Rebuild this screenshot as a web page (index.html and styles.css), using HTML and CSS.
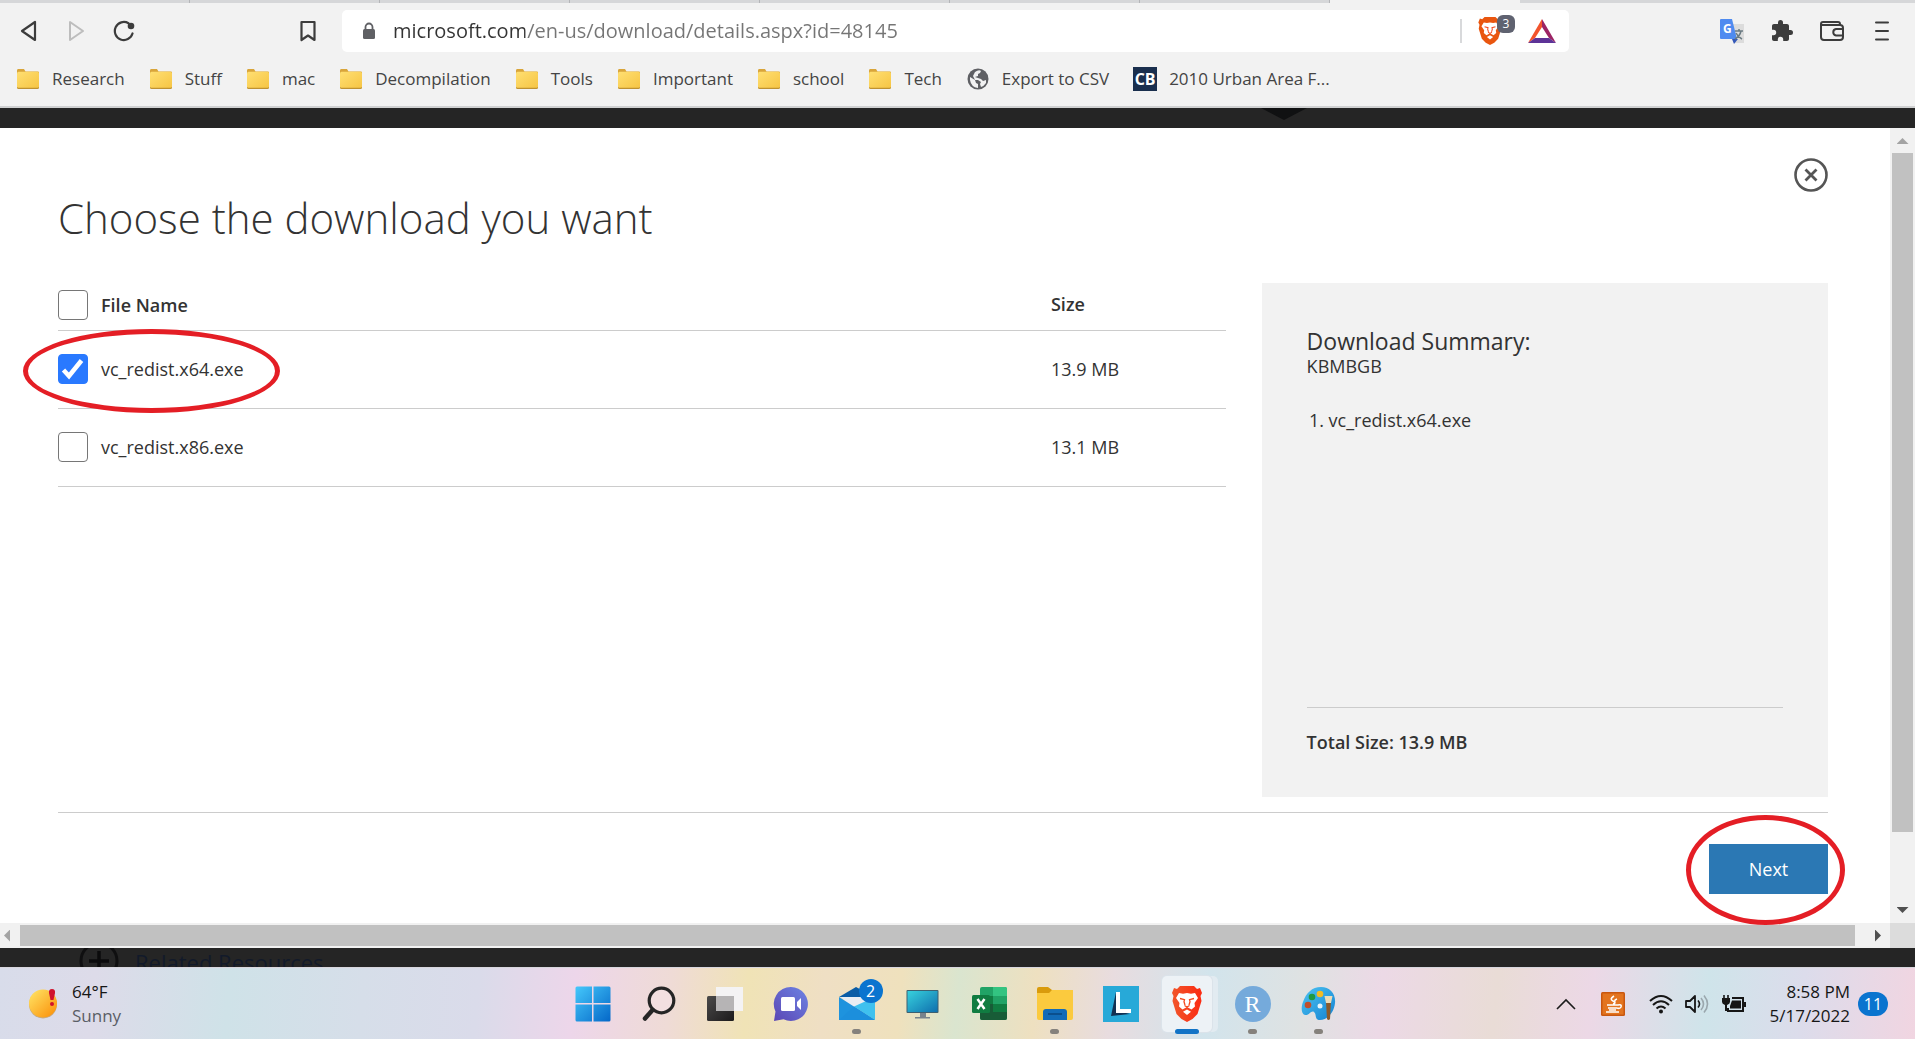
FILE: index.html
```html
<!DOCTYPE html>
<html lang="en">
<head>
<meta charset="utf-8">
<title>Choose the download you want</title>
<link rel="stylesheet" href="styles.css">
</head>
<body>
<svg class="defs" aria-hidden="true">
  <defs>
    <linearGradient id="gFolder" x1="0" y1="0" x2="1" y2="1"><stop offset="0" stop-color="#ffdf72"/><stop offset="1" stop-color="#f6c544"/></linearGradient>
    <linearGradient id="gLion" x1="0" y1="0" x2="1" y2="0"><stop offset="0" stop-color="#f1562b"/><stop offset="1" stop-color="#fb2a12"/></linearGradient>
    <linearGradient id="gWin" x1="0" y1="0" x2="1" y2="1"><stop offset="0" stop-color="#45c8fb"/><stop offset="1" stop-color="#0467c8"/></linearGradient>
    <linearGradient id="gChat" x1="1" y1="0" x2="0" y2="1"><stop offset="0" stop-color="#6d84e4"/><stop offset="1" stop-color="#5b46b4"/></linearGradient>
    <linearGradient id="gScreen" x1="0" y1="0" x2="1" y2="1"><stop offset="0" stop-color="#37d1dd"/><stop offset="1" stop-color="#0f6fae"/></linearGradient>
    <linearGradient id="gSun" x1="0" y1="0" x2="1" y2="1"><stop offset="0" stop-color="#ffe768"/><stop offset="1" stop-color="#fb8c05"/></linearGradient>
    <linearGradient id="gPal" x1="0" y1="0" x2="1" y2="1"><stop offset="0" stop-color="#4ec4f2"/><stop offset="1" stop-color="#1382d2"/></linearGradient>
    <linearGradient id="gDark" x1="0" y1="0" x2="1" y2="1"><stop offset="0" stop-color="#4b4a4a"/><stop offset="1" stop-color="#1c1a1b"/></linearGradient>
    <symbol id="folder" viewBox="0 0 24 20"><path d="M1 1.500q0-1.500 1-1.500h6l1.500 2.500H22q1 0 1 1v5H1z" fill="#d9a53a"/><rect x="1" y="3" width="22" height="17" rx="1.500" fill="#bf9231"/><rect x="1" y="2.800" width="22" height="16" rx="1.500" fill="url(#gFolder)"/></symbol>
    <symbol id="lion" viewBox="0 0 30 36">
      <path d="M8 0h14l3 3 3-1 2 5-1.500 3 1 5-4 13-5 5-5.500 3-5.500-3-5-5-4-13 1-5L0 7l2-5 3 1z"/>
      <path d="M7 7l4 .8 4-.8 4 .8 4-.8 3 5-3.500 5 .5 3.500-3.500 3-4.500-2.500-4.500 2.500-3.500-3 .5-3.500L4 12z" fill="#fff"/>
      <path d="M15 23.500l4 2.200-4 3.300-4-3.300z" fill="#fff"/>
      <path d="M8 12.500l4.500 1.200-.5 2 1 3.300M22 12.500l-4.500 1.200.5 2-1 3.300M12.500 19.500l2.500 1.500 2.500-1.500" fill="none" stroke="#f4481d" stroke-width="1.300"/>
    </symbol>
  </defs>
</svg>

<header class="browser">
  <div class="tabs"><i></i><i></i><i></i><i></i><i></i><i></i><i></i><b></b><i class="rest"></i></div>
  <nav class="navrow">
    <div class="nav-left">
      <button aria-label="Back"><svg width="20" height="22" viewBox="0 0 20 22"><path d="M17 2v18L4 11z" fill="none" stroke="#3c3c3c" stroke-width="2.200" stroke-linejoin="round"/></svg></button>
      <button aria-label="Forward"><svg width="20" height="22" viewBox="0 0 20 22"><path d="M4 2v18l13-9z" fill="none" stroke="#bdbdbd" stroke-width="2" stroke-linejoin="round"/></svg></button>
      <button aria-label="Reload"><svg width="22" height="22" viewBox="0 0 22 22"><path d="M15.500 3.300A9 9 0 1 0 19.500 13.500" fill="none" stroke="#3c3c3c" stroke-width="2.200" stroke-linecap="round"/><circle cx="18" cy="6" r="3.300" fill="#3c3c3c"/></svg></button>
      <button class="mark" aria-label="Bookmark this page"><svg width="18" height="22" viewBox="0 0 18 22"><path d="M2.500 2h13v18L9 15.500 2.500 20z" fill="none" stroke="#3c3c3c" stroke-width="2.200" stroke-linejoin="round"/></svg></button>
    </div>
    <div class="address">
      <svg class="lock" width="14" height="18" viewBox="0 0 14 18"><path d="M3.500 8V5a3.500 3.500 0 0 1 7 0v3" fill="none" stroke="#5f6064" stroke-width="1.800"/><rect x="1" y="7" width="12" height="10" rx="1.500" fill="#5f6064"/></svg>
      <input class="url" type="text" aria-label="Address" value="microsoft.com/en-us/download/details.aspx?id=48145">
      <span class="sep"></span>
      <button class="shield" aria-label="Brave Shields"><svg width="24" height="28" fill="#e9560f"><use href="#lion"/></svg><span class="count">3</span></button>
      <button aria-label="Brave Rewards"><svg width="28" height="26" viewBox="0 0 28 26"><path d="M14 1L0 25l7-5 7-11z" fill="#f2542d"/><path d="M14 1l14 24-7-5-7-11z" fill="#9c2464"/><path d="M0 25h28l-7-5H7z" fill="#5d3397"/></svg></button>
    </div>
    <div class="nav-right">
      <button aria-label="Translate"><svg width="25" height="25" viewBox="0 0 25 25"><path d="M9 5h15v19H14z" fill="#dcdcdc"/><path d="M12 20h6l-4 5z" fill="#3458b8"/><path d="M1 0h11l5 20H1q-1 0-1-1V1q0-1 1-1z" fill="#4f8bf0"/><path d="M15 12h8M19 10v2M21 12q-1 5-6 8M16 14q2 4 6 6" stroke="#6b7b83" stroke-width="1.500" fill="none"/><text x="3" y="14" class="g">G</text></svg></button>
      <button aria-label="Extensions"><svg width="24" height="24" viewBox="0 0 24 24"><path d="M20.500 11H19V7c0-1.100-.9-2-2-2h-4V3.500a2.500 2.500 0 0 0-5 0V5H4c-1.100 0-2 .9-2 2v3.800h1.500a2.700 2.700 0 0 1 0 5.400H2V20c0 1.100.9 2 2 2h3.800v-1.500a2.700 2.700 0 0 1 5.400 0V22H17c1.100 0 2-.9 2-2v-4h1.500a2.500 2.500 0 0 0 0-5z" fill="#3c3c3c"/></svg></button>
      <button aria-label="Wallet"><svg width="24" height="20" viewBox="0 0 24 20"><path d="M20 4V3a2 2 0 0 0-2-2H3a2 2 0 0 0-2 2v13a3 3 0 0 0 3 3h16a3 3 0 0 0 3-3V7a3 3 0 0 0-3-3H2M23 8h-7a3.300 3.300 0 0 0 0 6.500h7" fill="none" stroke="#3c3c3c" stroke-width="2"/></svg></button>
      <button aria-label="Menu"><svg width="16" height="20" viewBox="0 0 16 20"><path d="M2 1.500h12M2 10h12M2 18.500h12" stroke="#3c3c3c" stroke-width="2" stroke-linecap="round"/></svg></button>
    </div>
  </nav>
  <nav class="bookmarks">
    <a href="#"><svg><use href="#folder"/></svg>Research</a>
    <a href="#"><svg><use href="#folder"/></svg>Stuff</a>
    <a href="#"><svg><use href="#folder"/></svg>mac</a>
    <a href="#"><svg><use href="#folder"/></svg>Decompilation</a>
    <a href="#"><svg><use href="#folder"/></svg>Tools</a>
    <a href="#"><svg><use href="#folder"/></svg>Important</a>
    <a href="#"><svg><use href="#folder"/></svg>school</a>
    <a href="#"><svg><use href="#folder"/></svg>Tech</a>
    <a href="#"><svg viewBox="0 0 22 22"><circle cx="11" cy="11" r="10.500" fill="#5f6064"/><path d="M3 9l5 3 1 3 2 1v4q-7-1-8-8zM8 4q4-3 6-1l-1 2-2 1v2l-3 1 6 2 2 2 3-1v3q-2 3-5 4l-1-3 1-2-3-2H8L6 8z" fill="#f2f2f2"/></svg>Export to CSV</a>
    <a href="#"><span class="cb">CB</span>2010 Urban Area F...</a>
  </nav>
</header>

<div class="shade shade-top"><svg width="46" height="12" viewBox="0 0 46 12"><path d="M0 0h46L23 12z" fill="#101112"/></svg></div>

<main class="dialog">
  <section class="content">
    <div class="head">
      <h1>Choose the download you want</h1>
      <button class="close" aria-label="Close"><svg width="34" height="34" viewBox="0 0 34 34"><circle cx="17" cy="17" r="15.500" fill="none" stroke="#555" stroke-width="2.600"/><path d="M11.500 11.500l11 11M22.500 11.500l-11 11" stroke="#555" stroke-width="2.800"/></svg></button>
    </div>
    <div class="columns">
      <table class="files">
        <thead><tr><th><label><input type="checkbox">File Name</label></th><th class="size">Size</th></tr></thead>
        <tbody>
          <tr><td><label class="ringed"><input type="checkbox" checked>vc_redist.x64.exe<span class="ring ring-file"></span></label></td><td class="size">13.9 MB</td></tr>
          <tr><td><label><input type="checkbox">vc_redist.x86.exe</label></td><td class="size">13.1 MB</td></tr>
        </tbody>
      </table>
      <aside class="summary">
        <h2>Download Summary:</h2>
        <p class="units">KBMBGB</p>
        <ol><li>vc_redist.x64.exe</li></ol>
        <p class="total">Total Size: 13.9 MB</p>
      </aside>
    </div>
    <footer class="actions"><div class="ringed"><button class="next">Next</button><span class="ring ring-next"></span></div></footer>
  </section>
  <div class="vbar"><i class="tri up"></i><span class="thumb"></span><i class="tri down"></i></div>
  <div class="hbar"><i class="tri left"></i><span class="thumb"></span><i class="tri right"></i></div>
  <div class="corner"></div>
</main>

<div class="shade shade-bottom">
  <svg width="40" height="32" viewBox="0 0 40 32"><circle cx="20" cy="13" r="18" fill="none" stroke="#0f0f10" stroke-width="3"/><path d="M10 13h20M20 3v20" stroke="#0b0b0c" stroke-width="3.500"/></svg>
  <span>Related Resources</span>
</div>

<footer class="taskbar">
  <button class="weather">
    <svg width="30" height="32" viewBox="0 0 30 32"><circle cx="15" cy="16.500" r="14" fill="#b98a3e" opacity=".6"/><circle cx="15" cy="15.500" r="14" fill="url(#gSun)"/><path d="M24 1q3.500 0 3 4l-1.500 7h-3L21 5q-.5-4 3-4z" fill="#d0122c"/><circle cx="24" cy="16" r="2" fill="#d0122c"/></svg>
    <span>64°F<small>Sunny</small></span>
  </button>
  <div class="apps">
    <button aria-label="Start"><svg viewBox="0 0 36 36"><path d="M.5 2Q.5.500 2 .5h15V17H.5zM18.500.5H34q1.500 0 1.500 1.500v15h-17zM.5 18.500H17v17H2Q.5 35.500.5 34zM18.500 18.500h17V34q0 1.500-1.500 1.500H18.500z" fill="url(#gWin)"/></svg></button>
    <button aria-label="Search"><svg viewBox="0 0 36 36"><circle cx="20.500" cy="14.500" r="12.300" fill="#f3dfe0" stroke="#252525" stroke-width="3.200"/><path d="M11.500 24L4 32.500" stroke="#252525" stroke-width="4.500" stroke-linecap="round"/></svg></button>
    <button aria-label="Task view"><svg viewBox="0 0 36 36"><rect x="0" y="10" width="27" height="25" rx="1.500" fill="url(#gDark)"/><path d="M9 1h27v24H9z" fill="#f4f3f4"/><path d="M9 10h18v15H9z" fill="#b6b4b5"/></svg></button>
    <button aria-label="Chat"><svg viewBox="0 0 36 36"><path d="M18 1a17 17 0 1 1-7.500 32.300L1 35l1.500-9.500A17 17 0 0 1 18 1z" fill="url(#gChat)"/><rect x="8" y="11" width="14" height="14" rx="1.500" fill="#fff"/><path d="M24 16l4-4v12l-4-4z" fill="#fff"/></svg></button>
    <button aria-label="Mail" class="open"><svg viewBox="0 0 36 36"><path d="M0 11L17 1l19 10z" fill="#0a5ca6"/><path d="M2 11h32L18 26z" fill="#e9edf3"/><path d="M0 11l36 23H0z" fill="#1e93de"/><path d="M36 11v23L15 20.500z" fill="#3fc1ef"/><path d="M0 34h36L15 20.500z" fill="#1c8fdc"/></svg><span class="badge">2</span></button>
    <button aria-label="Monitor"><svg viewBox="0 0 36 36"><path d="M15 26h6v5h4v1.500H10V31h5z" fill="#78838c"/><rect x="1.500" y="4" width="32" height="23" rx="1" fill="#3d5f70"/><rect x="2.500" y="5" width="30" height="21" fill="url(#gScreen)"/></svg></button>
    <button aria-label="Excel"><svg viewBox="0 0 36 36"><rect x="9" y="1" width="27" height="33" rx="2" fill="#21a366"/><path d="M22 1h12q2 0 2 2v7H22z" fill="#33c481"/><path d="M9 10h13v8H9z" fill="#107c41"/><path d="M22 18h14v8H22z" fill="#107c41"/><path d="M9 18h13v8H9zM9 26h27v6q0 2-2 2H11q-2 0-2-2z" fill="#185c37"/><rect x="1" y="9" width="18" height="18" rx="1.500" fill="#107c41"/><path d="M6.500 13l7 10M13.500 13l-7 10" stroke="#fff" stroke-width="2.500"/></svg></button>
    <button aria-label="File Explorer" class="open"><svg viewBox="0 0 36 36"><path d="M0 3q0-2 2-2h9l4 3h19q2 0 2 2v5H0z" fill="#d99b0c"/><path d="M0 7h12l3-3h21v28q0 2-2 2H2q-2 0-2-2z" fill="#fbca3e"/><path d="M6 34V26q0-3 3-3h18q3 0 3 3v8z" fill="#126bb7"/><path d="M11 28h14" stroke="#0b4f8d" stroke-width="2"/></svg></button>
    <button aria-label="L"><svg viewBox="0 0 36 36"><path d="M0 0h36v36H0z" fill="#27a9d8"/><path d="M13 6L8 30l19-2-12-3z" fill="#123253"/><path d="M13 6h4v17h11v4H13z" fill="#fff"/></svg></button>
    <button aria-label="Brave" class="open active"><span class="tile"><svg viewBox="0 0 30 36" fill="url(#gLion)"><use href="#lion"/></svg></span></button>
    <button aria-label="R" class="open"><span class="r">R</span></button>
    <button aria-label="Paint" class="open"><svg viewBox="0 0 36 36"><path d="M20 1c9 0 15 7 14 16-1 10-8 17-15 17-6 0-3-6-6-8s-5 4-9 3C0 28 0 21 2 16 5 7 11 1 20 1z" fill="url(#gPal)"/><circle cx="7" cy="19" r="3.300" fill="#c14f2c"/><circle cx="11" cy="11" r="3.300" fill="#1f9a43"/><circle cx="19" cy="8" r="3.300" fill="#f2bc25"/><circle cx="19" cy="20" r="2.500" fill="#e5f4fb"/><path d="M25 16h5l-1 17q-1.500 2-3 0z" fill="#8b5a2b"/><path d="M23.500 10h8l-1.500 7h-5z" fill="#ecdcb9"/></svg></button>
  </div>
  <div class="tray">
    <button aria-label="Show hidden icons"><svg width="20" height="12" viewBox="0 0 20 12"><path d="M1 11l9-9 9 9" fill="none" stroke="#1c1c1c" stroke-width="1.600"/></svg></button>
    <button class="java" aria-label="Java"><svg width="24" height="24" viewBox="0 0 24 24"><rect width="24" height="24" rx="1.500" fill="#c9570f"/><rect x="1.500" y="1.500" width="21" height="21" fill="#e3741f"/><path d="M13 4q-5 3-1 5t0 3M16 7q-3 1-2 3M6 13h11q4-1 3 2-1 2-4 1M7 16h9M5 20h13M8 18h7" fill="none" stroke="#fff" stroke-width="1.600"/></svg></button>
    <button class="status" aria-label="Network, volume, battery">
      <svg width="24" height="20" viewBox="0 0 24 20"><path d="M1 7q11-10 22 0M4 11q8-7.500 16 0M7.500 14.500q4.500-4 9 0" fill="none" stroke="#161616" stroke-width="2"/><circle cx="12" cy="17.500" r="2" fill="#161616"/></svg>
      <svg width="24" height="20" viewBox="0 0 24 20"><path d="M1 7h4l5-5v16l-5-5H1z" fill="none" stroke="#161616" stroke-width="1.800" stroke-linejoin="round"/><path d="M13 6.500q3 3.500 0 7" fill="none" stroke="#161616" stroke-width="1.600"/><path d="M16 4q5 6 0 12M19 1.500q7 8.500 0 17" fill="none" stroke="#9aa7ad" stroke-width="1.600"/></svg>
      <svg width="26" height="20" viewBox="0 0 26 20"><path d="M3 1v4M7 1v4" stroke="#161616" stroke-width="1.600"/><path d="M1 4h8v4q0 2-3 3v6H4v-6Q1 10 1 8z" fill="#161616"/><path d="M11 4h11v13H7v-3" fill="none" stroke="#161616" stroke-width="2"/><path d="M11 6.500h9v8H9V12z" fill="#161616"/><path d="M23 8h2v5h-2z" fill="#161616"/></svg>
    </button>
    <button class="clock"><span>8:58 PM<br>5/17/2022</span><span class="pill">11</span></button>
  </div>
</footer>
</body>
</html>
```
FILE: styles.css
```css
* { box-sizing: border-box; }
body {
  margin: 0;
  min-height: 100vh;
  display: flex;
  flex-direction: column;
  background: #252525;
  color: #333;
  font: 18px/24px "Open Sans", "Noto Sans", sans-serif;
}
h1, h2, p, ol { margin: 0; padding: 0; font-weight: 400; }
button { font: inherit; color: inherit; background: none; border: 0; padding: 0; }
a { color: inherit; text-decoration: none; }
svg { display: block; flex: none; }
.defs { position: absolute; width: 0; height: 0; }

/* Browser chrome */
.browser { background: #f2f2f2; border-bottom: 2px solid #d0d1d2; }
.tabs { display: flex; height: 3px; }
.tabs i { width: 190px; background: #d6d7d9; border-right: 1px solid #b4b5b8; }
.tabs b { width: 190px; }
.tabs .rest { flex: 1; border: 0; }
.navrow { display: flex; align-items: center; padding-top: 7px; }
.navrow button { width: 32px; height: 32px; display: flex; align-items: center; justify-content: center; flex: none; }
.nav-left { width: 342px; display: flex; gap: 16px; padding: 0 18px 0 12px; }
.nav-left .mark { margin-left: auto; }
.address { flex: 1; height: 42px; display: flex; align-items: center; background: #fff; border-radius: 5px; padding: 0 11px 0 20px; }
.url {
  flex: 1;
  min-width: 0;
  border: 0;
  padding: 0;
  margin-left: 17px;
  height: 32px;
  font: 20px/32px "Open Sans", "Noto Sans", sans-serif;
  color: transparent;
  background: linear-gradient(90deg, #333 132px, #757575 132px);
  -webkit-background-clip: text;
  background-clip: text;
}
.sep { width: 2px; height: 24px; background: #d8d9db; margin-right: 12px; }
.navrow .shield { position: relative; margin-right: 20px; }
.count {
  position: absolute;
  left: 23px;
  top: 0;
  width: 18px;
  height: 18px;
  border-radius: 6px;
  background: #5f6270;
  color: #fff;
  font-size: 12px;
  line-height: 18px;
  text-align: center;
}
.nav-right { width: 346px; display: flex; justify-content: flex-end; gap: 18px; padding-right: 17px; }
.g { font: 700 12px "Open Sans", sans-serif; fill: #fff; }
.bookmarks { display: flex; align-items: center; gap: 24px; height: 54px; padding-left: 16px; font-size: 17px; color: #444; white-space: nowrap; }
.bookmarks a { display: flex; align-items: center; gap: 12px; }
.bookmarks svg { width: 24px; height: 22px; }
.cb { width: 24px; height: 24px; background: #1a2f4e; color: #fff; font: 700 16px/24px "Open Sans", sans-serif; text-align: center; }

/* Dimmed page behind the dialog */
.shade { background: #252525; overflow: hidden; }
.shade-top { height: 20px; display: flex; justify-content: flex-end; padding-right: 608px; }
.shade-bottom { height: 19px; display: flex; gap: 16px; padding-left: 79px; font-size: 22px; line-height: 28px; color: #121a2a; }

/* Dialog */
.dialog { flex: 1; display: grid; grid-template: 1fr 25px / 1fr 25px; background: #fff; }
.content { display: flex; flex-direction: column; padding: 30px 62px 29px 58px; }
.head { display: flex; justify-content: space-between; align-items: flex-start; }
.head h1 { font-size: 42px; line-height: 58px; font-weight: 300; margin-top: 31px; }
.columns { flex: 1; display: flex; justify-content: space-between; align-items: stretch; margin-top: 36px; }
.files { width: 66%; align-self: flex-start; border-collapse: collapse; table-layout: fixed; }
.files th, .files td { height: 78px; padding: 0; border-bottom: 1px solid #ccc; text-align: left; vertical-align: middle; }
.files th { height: 47px; padding-bottom: 4px; font-weight: 600; }
.files thead label { padding-top: 2px; }
.files .size { width: 15%; }
.files label { display: flex; width: fit-content; align-items: center; gap: 13px; }
.files input {
  appearance: none;
  width: 30px;
  height: 30px;
  margin: 0;
  border: 1px solid #767676;
  border-radius: 4px;
  background: #fff;
}
.files input:checked {
  border-color: #2979ff;
  background: #2979ff url("data:image/svg+xml,%3Csvg xmlns='http://www.w3.org/2000/svg' viewBox='0 0 28 28'%3E%3Cpath d='M4.500 15l5.500 6L22.500 5.500' fill='none' stroke='white' stroke-width='4.500'/%3E%3C/svg%3E");
}
.ringed { position: relative; }
.ring { position: absolute; border: 5px solid #e41e25; border-radius: 50%; pointer-events: none; }
.ring-file { left: -35px; top: -25px; width: 257px; height: 84px; }
.ring-next { left: -23px; top: -29px; width: 159px; height: 110px; }
.summary { width: 32%; display: flex; flex-direction: column; background: #f2f2f2; padding: 43px 45px; }
.summary h2 { font-size: 23px; line-height: 30px; }
.summary .units { line-height: 20px; }
.summary ol { margin-top: 32px; padding-left: 22px; }
.summary .total { margin-top: auto; border-top: 1px solid #ccc; padding-top: 22px; font-weight: 600; }
.actions { display: flex; justify-content: flex-end; margin-top: 15px; border-top: 1px solid #ccc; padding-top: 31px; }
.next { display: block; width: 119px; height: 50px; background: #2b78b4; color: #fff; }

/* Scroll bars */
.vbar, .hbar { background: #f1f1f1; display: flex; align-items: center; }
.vbar { flex-direction: column; padding: 10px 0; }
.hbar { padding: 0 9px 0 4px; }
.thumb { background: #c1c1c1; flex: 1; }
.vbar .thumb { width: 21px; margin: 9px 0 75px; }
.hbar .thumb { height: 21px; margin: 0 20px 0 10px; }
.corner { background: #dcdcdc; }
.tri { width: 12px; height: 6px; background: #505050; flex: none; }
.up { clip-path: polygon(50% 0, 100% 100%, 0 100%); background: #a3a3a3; }
.down { clip-path: polygon(0 0, 100% 0, 50% 100%); }
.left, .right { width: 6px; height: 12px; }
.left { clip-path: polygon(100% 0, 100% 100%, 0 50%); background: #a3a3a3; }
.right { clip-path: polygon(0 0, 100% 50%, 0 100%); }

/* Taskbar */
.taskbar {
  height: 72px;
  display: grid;
  grid-template-columns: 1fr auto 1fr;
  align-items: center;
  border-top: 1px solid #d8d6dd;
  color: #161616;
  font-size: 17px;
  line-height: 24px;
  background: linear-gradient(95deg, #d8dcea 0%, #dddbe9 5%, #cfe2e8 12%, #d6dee9 19%, #dadbea 25%, #edd6ea 30%, #efdbd6 35%, #f0e3b6 39%, #efdfc4 43%, #efe1bd 47%, #dae5cf 50%, #eee0c0 54%, #e8dcdf 58%, #d2e4ec 63%, #dfe2e2 68%, #ecd9e6 72%, #e9dcd6 78%, #ecd8e6 83%, #cfe4ea 89%, #dcdceb 94%, #f1d5e1 100%);
}
.weather { display: flex; align-items: center; gap: 14px; padding-left: 28px; text-align: left; justify-self: start; }
.weather small { display: block; font-size: 17px; color: #5a5e66; }
.apps { display: flex; height: 71px; padding-right: 4px; }
.apps button { position: relative; width: 66px; display: flex; align-items: center; justify-content: center; }
.apps svg { width: 36px; height: 36px; }
.apps .open::after { content: ""; position: absolute; bottom: 5px; width: 9px; height: 5px; border-radius: 3px; background: #85817c; }
.apps .active::after { width: 24px; background: #1173c6; }
.badge { position: absolute; right: 7px; top: 11px; width: 24px; height: 24px; border-radius: 50%; background: #0a74cf; color: #fff; font-size: 16px; }
.tile { width: 50px; height: 56px; display: flex; align-items: center; justify-content: center; background: #edf2f6; border-radius: 5px; box-shadow: 0 0 0 1px #dbe3ea, 6px 0 0 #e2ebf1; }
.r { width: 36px; height: 36px; border-radius: 50%; background: #75aadb; color: #fff; font: 24px/36px "Liberation Serif", serif; }
.tray { display: flex; align-items: center; justify-content: flex-end; padding-right: 27px; }
.java { margin: 0 24px 0 25px; }
.status { display: flex; gap: 12px; }
.clock { display: flex; align-items: center; gap: 8px; margin-left: 22px; text-align: right; }
.pill { width: 30px; height: 24px; border-radius: 12px; background: #0a74cf; color: #fff; text-align: center; font-size: 16px; }
```
